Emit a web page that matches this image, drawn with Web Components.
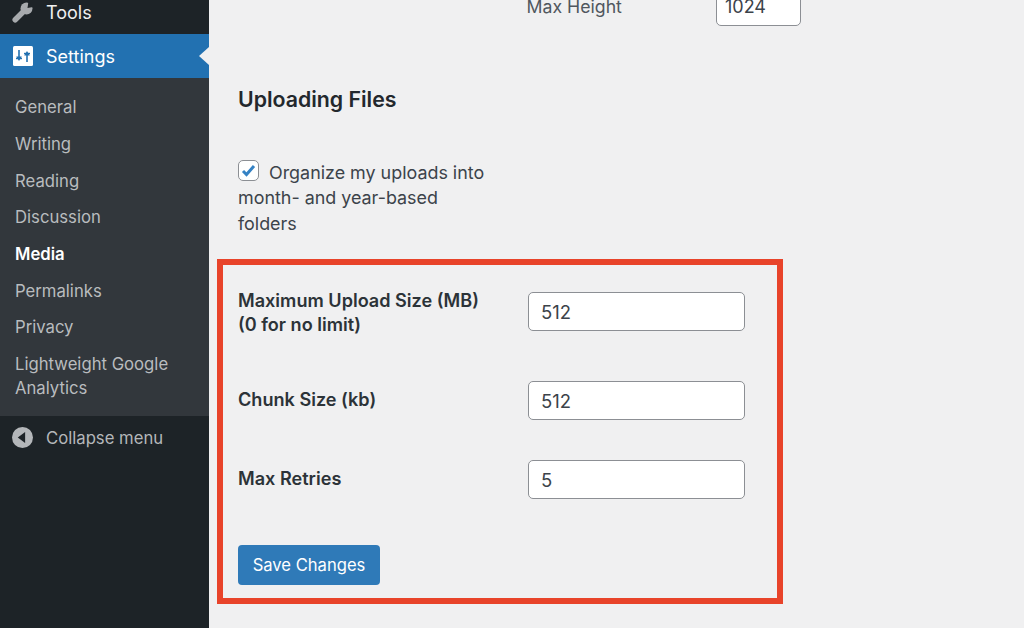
<!DOCTYPE html>
<html><head><meta charset="utf-8">
<style>
html,body{margin:0;padding:0;width:1024px;height:628px;overflow:hidden;background:#f0f0f1;font-family:Inter,"Liberation Sans",sans-serif}
wp-app{display:flex;width:1024px;height:628px;overflow:hidden}
</style></head><body>
<wp-app>
  <wp-sidebar slot="side">
    <wp-menu-item icon="tools">Tools</wp-menu-item>
    <wp-menu-item icon="settings" current>Settings</wp-menu-item>
    <wp-submenu>
      <wp-sub-item>General</wp-sub-item>
      <wp-sub-item>Writing</wp-sub-item>
      <wp-sub-item>Reading</wp-sub-item>
      <wp-sub-item>Discussion</wp-sub-item>
      <wp-sub-item active>Media</wp-sub-item>
      <wp-sub-item>Permalinks</wp-sub-item>
      <wp-sub-item>Privacy</wp-sub-item>
      <wp-sub-item>Lightweight Google Analytics</wp-sub-item>
    </wp-submenu>
    <wp-collapse>Collapse menu</wp-collapse>
  </wp-sidebar>
  <wp-main>
    <wp-max-row></wp-max-row>
    <wp-heading>Uploading Files</wp-heading>
    <wp-check>Organize my uploads into month- and year-based folders</wp-check>
    <wp-highlight>
      <wp-field value="512" gap="50" lift>Maximum Upload Size (MB)<br>(0 for no limit)</wp-field>
      <wp-field value="512" gap="40">Chunk Size (kb)</wp-field>
      <wp-field value="5" gap="0">Max Retries</wp-field>
      <wp-button>Save Changes</wp-button>
    </wp-highlight>
  </wp-main>
</wp-app>
<script>
function def(name, html){
  customElements.define(name, class extends HTMLElement{
    constructor(){super();const r=this.attachShadow({mode:'open'});r.innerHTML=typeof html==='function'?html(this):html;}
  });
}
def('wp-app','<style>:host{display:flex}</style><slot name="side"></slot><slot></slot>');
def('wp-sidebar','<style>:host{display:flex;flex-direction:column;width:209px;flex:none;height:628px;background:#1d2327}</style><slot></slot>');
const ICONS={
 tools:'<svg width="21" height="21" viewBox="0 0 21 21"><path stroke="#a7aaad" stroke-width="5.500" stroke-linecap="round" d="M3.200 17.800L13 8"/><circle cx="14.500" cy="6.500" r="6" fill="#a7aaad"/><path fill="#1d2327" d="M15.500 6L16.500 -1H24V4.500z"/></svg>',
 settings:'<svg width="20" height="20" viewBox="0 0 20 20"><rect width="20" height="20" rx="1.500" fill="#fff"/><path fill="#2271b1" d="M5.200 4h1.600v6.500h2L6 15 3.200 10.500h2zM13.200 16h1.600V9.500h2L14 5l-2.800 4.500h2z"/><rect x="3" y="11.700" width="6" height="1.500" fill="#2271b1"/><rect x="11" y="6.800" width="6" height="1.500" fill="#2271b1"/></svg>'
};
def('wp-menu-item',el=>{
  const cur=el.hasAttribute('current');
  return `<style>
  :host{display:flex;align-items:center;box-sizing:border-box;height:${cur?44:34}px;padding:0 0 ${cur?0:10}px ${cur?13:12}px;position:relative;
    background:${cur?'#2271b1':'#1d2327'};color:${cur?'#fff':'#f0f0f1'};font-size:18px}
  .i{width:${cur?33:34}px;flex:none;display:flex}
  .a{position:absolute;right:0;top:13px;width:0;height:0;border:9.500px solid transparent;border-left:0;border-right:10px solid #f0f0f1}
  </style><span class="i">${ICONS[el.getAttribute('icon')]}</span><slot></slot>${cur?'<span class="a"></span>':''}`;
});
def('wp-submenu','<style>:host{display:flex;flex-direction:column;background:#32373c;padding:11.600px 0 9px}</style><slot></slot>');
def('wp-sub-item',el=>`<style>:host{display:block;padding:6.500px 30px 6.500px 15px;font-size:16.700px;line-height:23.700px;color:${el.hasAttribute('active')?'#fff':'#b9bcbf'};font-weight:${el.hasAttribute('active')?600:400}}</style><slot></slot>`);
def('wp-collapse','<style>:host{display:flex;align-items:center;height:44px;padding-left:12px;color:#b4b7ba;font-size:16.700px}svg{margin-right:13px;flex:none}</style><svg width="21" height="21" viewBox="0 0 20 20"><circle cx="10" cy="10" r="10" fill="#b4b7ba"/><path fill="#1d2327" d="M12.500 4.800v10.400L5.500 10z"/></svg><slot></slot>');
def('wp-main','<style>:host{display:block;flex:1;min-width:0;height:628px;overflow:hidden;padding-left:29px;box-sizing:border-box;color:#2c3338}</style><slot></slot>');
def('wp-max-row',`<style>:host{display:flex;align-items:center;height:38px;margin-top:-12px;font-size:17.700px;color:#50575e;padding-left:288.500px}
 span{width:189.500px;margin-top:-2px}b{font-weight:400;box-sizing:border-box;display:flex;align-items:center;width:85px;height:38px;border:1px solid #8c8f94;border-radius:5px;background:#fff;padding:0 0 2px 8px;color:#3c434a;font-size:18px}</style>
 <span>Max Height</span><b>1024</b>`);
def('wp-heading','<style>:host{display:block;margin-top:59px;font-size:21.300px;line-height:28px;font-weight:600;color:#23282d}</style><slot></slot>');
def('wp-check',`<style>:host{display:block;width:250px;margin-top:46.500px;font-size:17.900px;line-height:25.700px;color:#3c434a}
 i{display:inline-block;box-sizing:border-box;width:21px;height:21px;border:1px solid #8c8f94;border-radius:5px;background:#fff;margin-right:10px;vertical-align:-2px}
 svg{display:block;margin:1px}</style><i><svg width="17" height="17" viewBox="0 0 17 17"><path fill="none" stroke="#3582c4" stroke-width="3" d="M3 9l3.500 3.500L14 4"/></svg></i><slot></slot>`);
def('wp-highlight','<style>:host{display:block;box-sizing:border-box;width:566px;height:345px;margin:22.500px 0 0 -21px;border:6px solid #e8432a;padding:27px 15px 0}</style><slot></slot>');
def('wp-field',el=>`<style>:host{display:flex;align-items:flex-start;height:39px;margin-bottom:${el.getAttribute('gap')}px;color:#2c3338;font-size:18.100px;font-weight:600;line-height:24px}
 .l{width:290px;flex:none;margin-top:${el.hasAttribute('lift')?-4:6}px}
 .v{box-sizing:border-box;width:216.500px;height:39px;border:1px solid #8c8f94;border-radius:5px;background:#fff;padding-left:12px;display:flex;align-items:center;font-weight:400;font-size:18.500px;color:#3c434a}</style>
 <div class="l"><slot></slot></div><div class="v">${el.getAttribute('value')}</div>`);
def('wp-button','<style>:host{display:flex;align-items:center;justify-content:center;box-sizing:border-box;width:142px;height:40px;margin-top:46px;background:#2f7ab8;border-radius:4px;color:#fff;font-size:16.600px}</style><slot></slot>');
</script>
</body></html>
